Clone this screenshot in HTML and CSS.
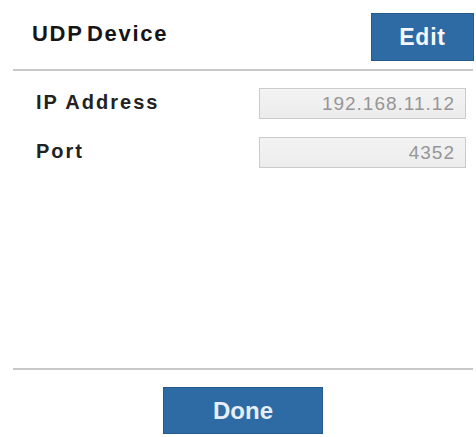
FILE: index.html
```html
<!DOCTYPE html>
<html>
<head>
<meta charset="utf-8">
<link rel="stylesheet" href="styles.css">
</head>
<body>
<div class="panel">
  <div class="header">
    <div class="title">UDP Device</div>
    <button class="btn edit-btn">Edit</button>
  </div>
  <div class="divider"></div>
  <div class="fields">
    <div class="row">
      <div class="label">IP Address</div>
      <div class="field">192.168.11.12</div>
    </div>
    <div class="row">
      <div class="label">Port</div>
      <div class="field">4352</div>
    </div>
  </div>
  <div class="divider bottom"></div>
  <div class="footer">
    <button class="btn done-btn">Done</button>
  </div>
</div>
</body>
</html>
```
FILE: styles.css
```css
html, body {
  margin: 0;
  padding: 0;
  background: #ffffff;
  font-family: "Liberation Sans", Arial, sans-serif;
}
.panel {
  width: 476px;
  height: 437px;
  padding: 13px 3px 0 13px;
  box-sizing: border-box;
}
.header {
  display: flex;
  justify-content: space-between;
  align-items: center;
  height: 48px;
  padding-left: 19px;
  margin-right: -1px;
}
.title {
  font-size: 22px;
  font-weight: bold;
  color: #161616;
  letter-spacing: 1.7px;
  word-spacing: -4px;
  margin-top: -6px;
}
.btn {
  border: 1px solid #235b8e;
  background: #2e6ba4;
  color: #f4f7fb;
  font-family: "Liberation Sans", Arial, sans-serif;
  font-weight: bold;
  padding: 0;
  margin: 0;
}
.edit-btn {
  width: 103px;
  height: 48px;
  font-size: 23px;
  letter-spacing: 0.8px;
}
.divider {
  height: 2px;
  background: #c8c8c8;
  margin-top: 8px;
}
.fields {
  display: flex;
  flex-direction: column;
  gap: 18px;
  padding: 17px 7px 0 23px;
  height: 199px;
  box-sizing: border-box;
}
.row {
  display: flex;
  justify-content: space-between;
  align-items: center;
  height: 31px;
}
.label {
  font-size: 20px;
  font-weight: bold;
  color: #222222;
  letter-spacing: 2px;
  margin-top: -3px;
}
.field {
  width: 207px;
  height: 31px;
  box-sizing: border-box;
  border: 1px solid #cbcbcb;
  background: linear-gradient(#f3f3f3, #ececec);
  color: #969696;
  font-size: 19px;
  letter-spacing: 1px;
  text-align: right;
  padding-right: 10px;
  line-height: 29px;
}
.divider.bottom {
  margin-top: 98px;
}
.footer {
  display: flex;
  justify-content: center;
  padding-top: 17px;
}
.done-btn {
  width: 160px;
  height: 47px;
  font-size: 24px;
  color: #e6eef7;
}
```
